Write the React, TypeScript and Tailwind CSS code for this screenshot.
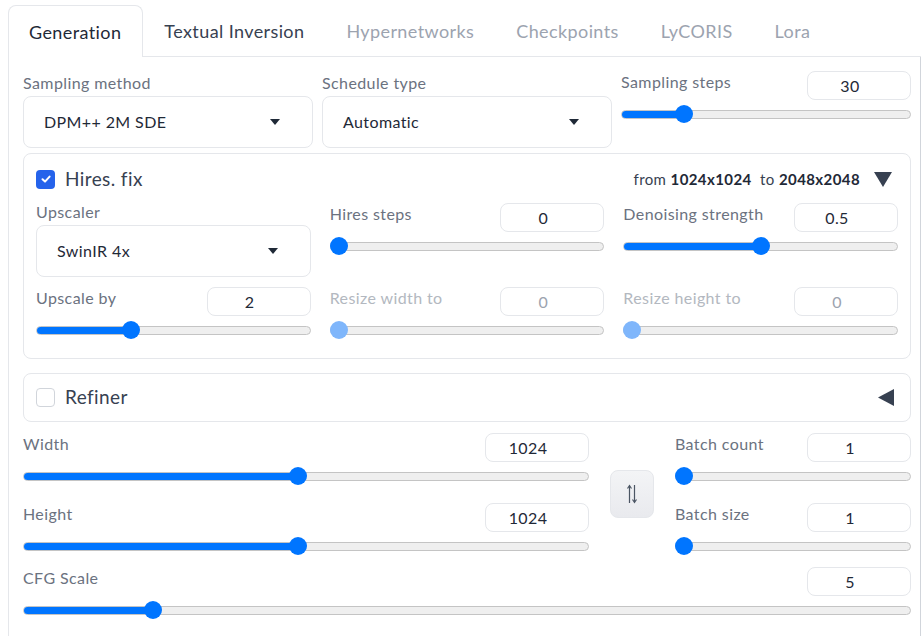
import React from 'react';

const FONT = { fontFamily: '"Lato", "Liberation Sans", sans-serif', letterSpacing: '0.4px' };

const Slider = ({ value, disabled = false }: { value: number; disabled?: boolean }) => (
  <div className="relative h-[18px] w-full flex items-center">
    <div className="relative h-[9px] w-full rounded-full border border-[#c4c4c4] bg-[#efefef] overflow-hidden">
      {!disabled && (
        <div className="h-full bg-[#0075ff]" style={{ width: `${value * 100}%` }}></div>
      )}
    </div>
    <div
      className={`absolute top-0 h-[18px] w-[18px] -ml-[9px] rounded-full ${disabled ? 'bg-[#7fb6fb]' : 'bg-[#0075ff]'}`}
      style={{ left: `calc(9px + ${value} * (100% - 18px))` }}
    ></div>
  </div>
);

const NumBox = ({ v, disabled = false }: { v: string; disabled?: boolean }) => (
  <div
    className={`w-[104px] h-[29px] shrink-0 rounded-lg border border-[#e5e7eb] bg-white flex items-center justify-center pr-[18px] text-[16px] ${disabled ? 'text-[#9ca3af]' : 'text-[#1f2937]'}`}
  >
    {v}
  </div>
);

const SliderField = ({ label, v, value, disabled = false }: { label: string; v: string; value: number; disabled?: boolean }) => (
  <div className="flex flex-col">
    <div className="flex items-center justify-between">
      <span className={`text-[16px] -mt-[7px] ${disabled ? 'text-[#b3b8c0]' : 'text-[#6b7280]'}`}>{label}</span>
      <NumBox v={v} disabled={disabled} />
    </div>
    <div className="mt-[5px]">
      <Slider value={value} disabled={disabled} />
    </div>
  </div>
);

const Dropdown = ({ label, v }: { label: string; v: string }) => (
  <div className="flex flex-col">
    <span className="text-[16px] text-[#6b7280] leading-[20px]">{label}</span>
    <div className="mt-[3px] h-[52px] rounded-lg border border-[#e5e7eb] bg-white flex items-center justify-between pl-[20px] pr-[32px]">
      <span className="text-[16px] text-[#1f2937]">{v}</span>
      <svg width="10" height="6" viewBox="0 0 10 6"><path d="M0 0 L10 0 L5 6 Z" fill="#1f2937" /></svg>
    </div>
  </div>
);

const Checkbox = ({ checked }: { checked: boolean }) =>
  checked ? (
    <div className="w-[19px] h-[19px] rounded-[4px] bg-[#2563eb] flex items-center justify-center">
      <svg width="12" height="12" viewBox="0 0 12 12">
        <path d="M2.5 6.3 L5 8.6 L9.6 3.6" stroke="white" strokeWidth="2" fill="none" strokeLinecap="round" strokeLinejoin="round" />
      </svg>
    </div>
  ) : (
    <div className="w-[19px] h-[19px] rounded-[4px] border border-[#d1d5db] bg-white"></div>
  );

const tabs = ['Generation', 'Textual Inversion', 'Hypernetworks', 'Checkpoints', 'LyCORIS', 'Lora'];

export default function App() {
  return (
    <div className="w-[921px] h-[636px] bg-white overflow-hidden" style={FONT}>
      {/* tab bar */}
      <div className="flex pt-[5px] pl-[8px]">
        {tabs.map((t, i) => (
          <div
            key={t}
            className={`h-[52px] flex items-center pt-[1px] text-[18px] ${
              i === 0
                ? 'pl-[20px] pr-[21px] border border-b-0 border-[#e5e7eb] rounded-t-lg text-[#1f2937]'
                : `px-[21px] border-b border-[#e5e7eb] ${i === 1 ? 'text-[#374151]' : 'text-[#9ca3af]'}`
            }`}
          >
            {t}
          </div>
        ))}
        <div className="flex-1 border-b border-[#e5e7eb]"></div>
      </div>

      {/* tab content */}
      <div className="ml-[8px] h-[579px] border-l border-[#e5e7eb] border-r border-r-dashed border-r-[#d1d5db] pl-[14px] pr-[9px] pt-[14px] flex flex-col">
        <div className="grid grid-cols-3 gap-[9px]">
          <div className="pt-[2px]"><Dropdown label="Sampling method" v="DPM++ 2M SDE" /></div>
          <div className="pt-[2px]"><Dropdown label="Schedule type" v="Automatic" /></div>
          <SliderField label="Sampling steps" v="30" value={0.2} />
        </div>

        {/* Hires. fix */}
        <div className="mt-[5px] border border-[#e5e7eb] rounded-lg px-[12px] pt-[12px] pb-[19px]">
          <div className="flex items-center justify-between h-[26px]">
            <div className="flex items-center gap-[10px]">
              <Checkbox checked />
              <span className="text-[19px] text-[#374151]">Hires. fix</span>
            </div>
            <div className="flex items-center text-[15px] text-[#374151] mr-[6px]">
              <span>from <b className="font-bold text-[#1f2937]">1024x1024</b>&nbsp; to <b className="font-bold text-[#1f2937]">2048x2048</b></span>
              <svg className="ml-[14px]" width="18" height="15" viewBox="0 0 18 15"><path d="M0 0 L18 0 L9 15 Z" fill="#374151" /></svg>
            </div>
          </div>
          <div className="mt-[11px] grid grid-cols-3 gap-x-[19px] gap-y-[10px]">
            <div className="-mt-[1px]"><Dropdown label="Upscaler" v="SwinIR 4x" /></div>
            <div className="self-start"><SliderField label="Hires steps" v="0" value={0} /></div>
            <div className="self-start"><SliderField label="Denoising strength" v="0.5" value={0.5} /></div>
            <SliderField label="Upscale by" v="2" value={0.335} />
            <SliderField label="Resize width to" v="0" value={0} disabled />
            <SliderField label="Resize height to" v="0" value={0} disabled />
          </div>
        </div>

        {/* Refiner */}
        <div className="mt-[14px] h-[49px] border border-[#e5e7eb] rounded-lg px-[12px] flex items-center justify-between">
          <div className="flex items-center gap-[10px]">
            <Checkbox checked={false} />
            <span className="text-[19px] text-[#374151]">Refiner</span>
          </div>
          <svg className="mr-[4px]" width="16" height="17" viewBox="0 0 16 17"><path d="M16 0 L16 17 L0 8.5 Z" fill="#374151" /></svg>
        </div>

        {/* Width / Height / Batch */}
        <div className="mt-[11px] flex items-center">
          <div className="w-[566px] flex flex-col gap-[18px]">
            <SliderField label="Width" v="1024" value={0.486} />
            <SliderField label="Height" v="1024" value={0.486} />
          </div>
          <div className="mx-[21px] w-[44px] h-[48px] rounded-lg border border-[#e5e7eb] bg-gradient-to-b from-[#f3f4f6] to-[#e9eaee] flex items-center justify-center">
            <svg width="14" height="20" viewBox="0 0 14 20">
              <path d="M4.5 19 V2 M2.5 4.5 L4.5 1.5 L6.5 4.5" stroke="#4b5563" strokeWidth="1.2" fill="none" />
              <path d="M9.5 1 V18 M7.5 15.5 L9.5 18.5 L11.5 15.5" stroke="#4b5563" strokeWidth="1.2" fill="none" />
            </svg>
          </div>
          <div className="flex-1 flex flex-col gap-[18px]">
            <SliderField label="Batch count" v="1" value={0} />
            <SliderField label="Batch size" v="1" value={0} />
          </div>
        </div>

        <div className="mt-[12px]">
          <SliderField label="CFG Scale" v="5" value={0.139} />
        </div>
      </div>
    </div>
  );
}
